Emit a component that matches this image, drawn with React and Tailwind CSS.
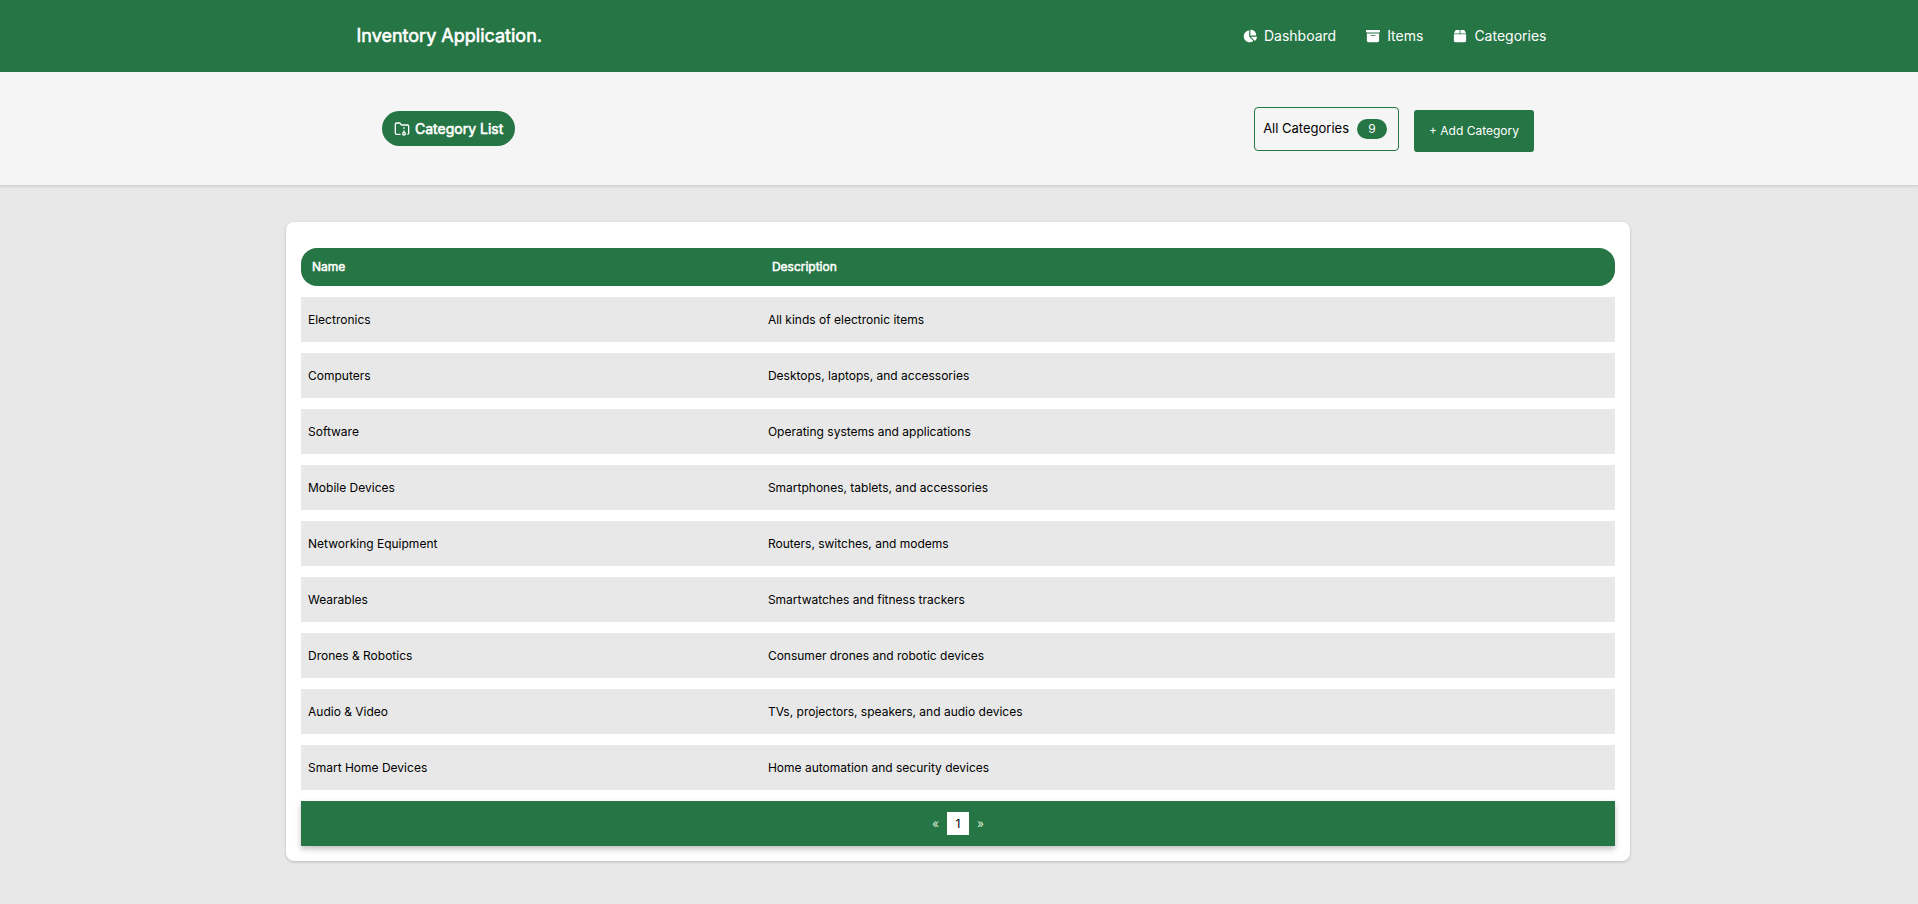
import { FaChartPie, FaBoxArchive, FaBox } from "react-icons/fa6";
import { FolderArchive } from "lucide-react";

const categories = [
  ["Electronics", "All kinds of electronic items"],
  ["Computers", "Desktops, laptops, and accessories"],
  ["Software", "Operating systems and applications"],
  ["Mobile Devices", "Smartphones, tablets, and accessories"],
  ["Networking Equipment", "Routers, switches, and modems"],
  ["Wearables", "Smartwatches and fitness trackers"],
  ["Drones & Robotics", "Consumer drones and robotic devices"],
  ["Audio & Video", "TVs, projectors, speakers, and audio devices"],
  ["Smart Home Devices", "Home automation and security devices"],
];

function NavLink({ icon: Icon, children }) {
  return (
    <a href="#" className="flex items-center gap-[7px]">
      <Icon className="size-3.5" />
      {children}
    </a>
  );
}

export default function App() {
  return (
    <div className="min-h-screen bg-[#e8e8e8] font-['Inter',sans-serif] text-xs text-black">
      <header className="bg-[#267544] pr-[15px] text-white">
        <div className="mx-auto flex h-[72px] w-full max-w-[1190px] items-center justify-between">
          <a href="#" className="text-lg [-webkit-text-stroke:0.6px]">Inventory Application.</a>
          <nav className="flex gap-[30px] text-sm">
            <NavLink icon={FaChartPie}>Dashboard</NavLink>
            <NavLink icon={FaBoxArchive}>Items</NavLink>
            <NavLink icon={FaBox}>Categories</NavLink>
          </nav>
        </div>
      </header>
      <section className="border-b border-[#d6d6d6] bg-[#f5f5f5] pr-0.5 shadow-[0_1px_2px_rgba(0,0,0,0.08)]">
        <div className="mx-auto flex h-[113px] w-full max-w-[1152px] items-center justify-between">
          <h1 className="flex h-[35px] items-center gap-[5px] rounded-full bg-[#267544] px-3 text-sm text-white [-webkit-text-stroke:0.6px]">
            <FolderArchive className="size-4" strokeWidth={2} />
            Category List
          </h1>
          <div className="flex items-center gap-[15px]">
            <div className="flex h-11 items-center gap-2 rounded border border-[#267544] px-2 pr-[11px] text-[13px]">
              All Categories
              <span className="flex h-5 w-[30px] items-center justify-center rounded-full bg-[#267544] text-xs text-white">9</span>
            </div>
            <button type="button" className="mt-1 h-[42px] rounded-[3px] bg-[#267544] px-[15px] text-white">+ Add Category</button>
          </div>
        </div>
      </section>
      <main className="pt-9 pr-0.5">
        <div className="mx-auto w-full max-w-[1344px] rounded-lg bg-white p-[15px] shadow-[0_1px_3px_rgba(0,0,0,0.2)]">
          <table className="w-full border-separate border-spacing-x-0 border-spacing-y-[11px] text-left">
            <thead>
              <tr className="h-[38px] bg-[#267544] text-white [-webkit-text-stroke:0.5px]">
                <th className="w-[35%] rounded-l-2xl px-[11px] font-normal">Name</th>
                <th className="rounded-r-2xl px-[11px] font-normal">Description</th>
              </tr>
            </thead>
            <tbody>
              {categories.map(([name, description]) => (
                <tr key={name} className="h-[45px] bg-[#e8e8e8]">
                  <td className="px-[7px]">{name}</td>
                  <td className="px-[7px]">{description}</td>
                </tr>
              ))}
            </tbody>
          </table>
          <nav className="flex h-[45px] items-center justify-center gap-2 bg-[#267544] text-white shadow-[0_3px_6px_rgba(0,0,0,0.25)]">
            <a href="#" aria-label="Previous" className="text-[#d9ead3]">«</a>
            <a href="#" className="flex h-[23px] w-[22px] items-center justify-center bg-white text-black">1</a>
            <a href="#" aria-label="Next" className="text-[#d9ead3]">»</a>
          </nav>
        </div>
      </main>
    </div>
  );
}
